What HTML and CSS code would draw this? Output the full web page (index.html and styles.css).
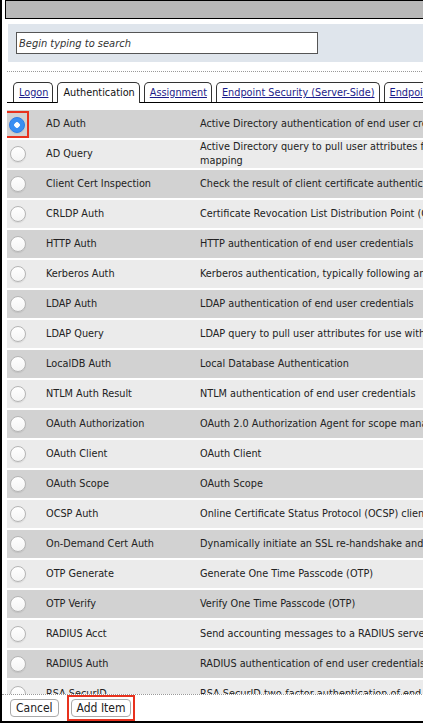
FILE: index.html
```html
<!DOCTYPE html>
<html lang="en">
<head>
    <meta charset="UTF-8">
    <meta name="viewport" content="width=device-width, initial-scale=1.0">
    <title>Add Item</title>
    <link rel="stylesheet" href="styles.css">
</head>
<body>
    <div class="dialog">
        <div class="titlebar"></div>

        <div class="search-panel">
            <input type="text" class="search" placeholder="Begin typing to search">
        </div>

        <!-- Category tabs -->
        <div class="tabs">
            <a class="tab" href="#">Logon</a>
            <span class="tab active">Authentication</span>
            <a class="tab" href="#">Assignment</a>
            <a class="tab" href="#">Endpoint Security (Server-Side)</a>
            <a class="tab" href="#">Endpoint Security (Client-Side)</a>
        </div>

        <div class="list">
            <table class="items">
                <tr>
                    <td class="pick"><span class="mark"><input type="radio" name="item" checked></span></td>
                    <td class="name">AD Auth</td>
                    <td class="desc">Active Directory authentication of end user credentials</td>
                </tr>
                <tr>
                    <td class="pick"><input type="radio" name="item"></td>
                    <td class="name">AD Query</td>
                    <td class="desc">Active Directory query to pull user attributes for use with resource assignment<br>mapping</td>
                </tr>
                <tr>
                    <td class="pick"><input type="radio" name="item"></td>
                    <td class="name">Client Cert Inspection</td>
                    <td class="desc">Check the result of client certificate authentication</td>
                </tr>
                <tr>
                    <td class="pick"><input type="radio" name="item"></td>
                    <td class="name">CRLDP Auth</td>
                    <td class="desc">Certificate Revocation List Distribution Point (CRLDP) authentication</td>
                </tr>
                <tr>
                    <td class="pick"><input type="radio" name="item"></td>
                    <td class="name">HTTP Auth</td>
                    <td class="desc">HTTP authentication of end user credentials</td>
                </tr>
                <tr>
                    <td class="pick"><input type="radio" name="item"></td>
                    <td class="name">Kerberos Auth</td>
                    <td class="desc">Kerberos authentication, typically following an HTTP 401 response</td>
                </tr>
                <tr>
                    <td class="pick"><input type="radio" name="item"></td>
                    <td class="name">LDAP Auth</td>
                    <td class="desc">LDAP authentication of end user credentials</td>
                </tr>
                <tr>
                    <td class="pick"><input type="radio" name="item"></td>
                    <td class="name">LDAP Query</td>
                    <td class="desc">LDAP query to pull user attributes for use with resource assignment</td>
                </tr>
                <tr>
                    <td class="pick"><input type="radio" name="item"></td>
                    <td class="name">LocalDB Auth</td>
                    <td class="desc">Local Database Authentication</td>
                </tr>
                <tr>
                    <td class="pick"><input type="radio" name="item"></td>
                    <td class="name">NTLM Auth Result</td>
                    <td class="desc">NTLM authentication of end user credentials</td>
                </tr>
                <tr>
                    <td class="pick"><input type="radio" name="item"></td>
                    <td class="name">OAuth Authorization</td>
                    <td class="desc">OAuth 2.0 Authorization Agent for scope management</td>
                </tr>
                <tr>
                    <td class="pick"><input type="radio" name="item"></td>
                    <td class="name">OAuth Client</td>
                    <td class="desc">OAuth Client</td>
                </tr>
                <tr>
                    <td class="pick"><input type="radio" name="item"></td>
                    <td class="name">OAuth Scope</td>
                    <td class="desc">OAuth Scope</td>
                </tr>
                <tr>
                    <td class="pick"><input type="radio" name="item"></td>
                    <td class="name">OCSP Auth</td>
                    <td class="desc">Online Certificate Status Protocol (OCSP) client authentication</td>
                </tr>
                <tr>
                    <td class="pick"><input type="radio" name="item"></td>
                    <td class="name">On-Demand Cert Auth</td>
                    <td class="desc">Dynamically initiate an SSL re-handshake and validate the received client certificate</td>
                </tr>
                <tr>
                    <td class="pick"><input type="radio" name="item"></td>
                    <td class="name">OTP Generate</td>
                    <td class="desc">Generate One Time Passcode (OTP)</td>
                </tr>
                <tr>
                    <td class="pick"><input type="radio" name="item"></td>
                    <td class="name">OTP Verify</td>
                    <td class="desc">Verify One Time Passcode (OTP)</td>
                </tr>
                <tr>
                    <td class="pick"><input type="radio" name="item"></td>
                    <td class="name">RADIUS Acct</td>
                    <td class="desc">Send accounting messages to a RADIUS server</td>
                </tr>
                <tr>
                    <td class="pick"><input type="radio" name="item"></td>
                    <td class="name">RADIUS Auth</td>
                    <td class="desc">RADIUS authentication of end user credentials</td>
                </tr>
                <tr>
                    <td class="pick"><input type="radio" name="item"></td>
                    <td class="name">RSA SecurID</td>
                    <td class="desc">RSA SecurID two-factor authentication of end user credentials</td>
                </tr>
            </table>
        </div>

        <div class="footer">
            <button class="btn">Cancel</button>
            <span class="mark"><button class="btn">Add Item</button></span>
        </div>
    </div>
</body>
</html>
```

FILE: styles.css
```css
html, body {
    margin: 0;
    padding: 0;
    overflow: hidden;
    background: #fff;
}
body {
    font-family: "DejaVu Sans Condensed", "DejaVu Sans", sans-serif;
    font-size: 10.8px;
    color: #222;
}
.dialog {
    width: 640px;
    height: 721px;
    border-left: 2px solid #000;
    border-bottom: 2px solid #000;
    display: flex;
    flex-direction: column;
}
.titlebar {
    height: 17px;
    margin-left: 3px;
    background: #b8b8b8;
    border: 1px solid #000;
    border-right: none;
}
.search-panel {
    margin: 5px 0 0 6px;
    height: 38px;
    background: #dfe5ec;
    display: flex;
    align-items: center;
    padding-left: 8px;
}
.search {
    width: 296px;
    height: 20px;
    margin: 0;
    padding: 0 2px;
    border: 1px solid #555;
    font-family: inherit;
    font-size: 11px;
    font-style: italic;
    color: #222;
    outline: none;
}
.search::placeholder {
    color: #333;
}
/* tabs */
.tabs {
    margin: 9px 0 0 5px;
    border-top: 1px dotted #999;
    padding: 10px 0 0 6px;
    display: flex;
    gap: 4px;
    border-bottom: 1px solid #000;
    white-space: nowrap;
}
.tab {
    display: block;
    height: 19px;
    line-height: 20px;
    padding: 0 4px 0 5px;
    border: 1px solid #333;
    border-bottom: none;
    border-radius: 5px 5px 0 0;
    color: #1c1c8a;
    text-decoration: underline;
    background: #fff;
}
.tab.active {
    color: #111;
    text-decoration: none;
    margin-bottom: -1px;
    height: 20px;
}
/* item list */
.list {
    flex: 1;
    overflow: hidden;
    margin-left: 5px;
    padding-top: 7px;
}
.items {
    border-collapse: collapse;
    white-space: nowrap;
}
.items td {
    height: 28px;
    padding: 0;
    border-bottom: 2px solid #fff;
    background: #ebebeb;
    vertical-align: middle;
    line-height: 14px;
}
.items tr:nth-child(odd) td {
    background: #d2d2d2;
}
.items .pick {
    width: 36px;
    padding-left: 3px;
}
.items .name {
    width: 154px;
}
.items .desc {
    padding-right: 20px;
}
/* radio buttons */
.items input[type="radio"] {
    appearance: none;
    -webkit-appearance: none;
    display: block;
    width: 16px;
    height: 16px;
    margin: 0;
    border: 1px solid #b4b4b4;
    border-radius: 50%;
    background: linear-gradient(#fff, #f4f4f4);
    box-shadow: 0 1px 1px rgba(0, 0, 0, 0.08);
}
.items input[type="radio"]:checked {
    border-color: #2f7de6;
    background: radial-gradient(circle, #fff 0, #fff 2.5px, #3a8ef2 3px);
}
.mark {
    display: inline-block;
    outline: 2px solid #e8321e;
}
.items .mark {
    display: block;
    width: 16px;
    padding: 4px 2px 3px;
    margin-left: -3px;
}
.footer {
    border-top: 1px dotted #999;
    padding: 2px 0 2px 8px;
    display: flex;
    gap: 10px;
    align-items: center;
}
.footer .mark {
    padding: 2px;
}
.btn {
    font-family: inherit;
    font-size: 12px;
    color: #222;
    background: #fff;
    border: 1px solid #aaa;
    border-radius: 4px;
    height: 18px;
    padding: 0 5px;
    margin: 0;
}
```
